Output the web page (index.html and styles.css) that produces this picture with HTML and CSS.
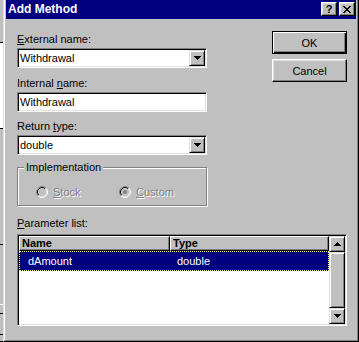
FILE: index.html
```html
<!DOCTYPE html>
<html>
<head>
<meta charset="utf-8">
<title>Add Method</title>
<link rel="stylesheet" href="styles.css">
</head>
<body>
<div class="screen">
  <div class="bgwin"></div>
  <div class="dialog">
    <div class="frame">
      <div class="titlebar">
        <span class="title">Add Method</span>
        <span class="tbtn help">?</span>
        <span class="tbtn close"><svg width="8" height="7" viewBox="0 0 8 7" shape-rendering="crispEdges"><path fill="#000" d="M0 0h2v1h-2zM6 0h2v1h-2zM1 1h2v1h-2zM5 1h2v1h-2zM2 2h4v1h-4zM3 3h2v1h-2zM2 4h4v1h-4zM1 5h2v1h-2zM5 5h2v1h-2zM0 6h2v1h-2zM6 6h2v1h-2z"/></svg></span>
      </div>
      <div class="client">
        <div class="top">
          <div class="form">
            <div class="lbl"><u>E</u>xternal name:</div>
            <div class="combo">
              <span class="val">Withdrawal</span>
              <span class="dd raised"><svg width="7" height="4" viewBox="0 0 7 4" shape-rendering="crispEdges"><path fill="#000" d="M0 0h7v1h-7zM1 1h5v1h-5zM2 2h3v1h-3zM3 3h1v1h-1z"/></svg></span>
            </div>
            <div class="lbl gap2">Internal <u>n</u>ame:</div>
            <div class="edit"><span class="val">Withdrawal</span></div>
            <div class="lbl gap3">Return <u>t</u>ype:</div>
            <div class="combo">
              <span class="val">double</span>
              <span class="dd raised"><svg width="7" height="4" viewBox="0 0 7 4" shape-rendering="crispEdges"><path fill="#000" d="M0 0h7v1h-7zM1 1h5v1h-5zM2 2h3v1h-3zM3 3h1v1h-1z"/></svg></span>
            </div>
            <fieldset class="group">
              <legend>Implementation</legend>
              <div class="radios">
                <div class="opt stock">
                  <svg class="radio" width="12" height="12" viewBox="0 0 12 12"><circle cx="6" cy="6" r="5" fill="#c0c0c0"/><path d="M2.11 9.89A5.5 5.5 0 0 1 9.89 2.11" fill="none" stroke="#808080"/><path d="M9.89 2.11A5.5 5.5 0 0 1 2.11 9.89" fill="none" stroke="#fff"/><path d="M2.82 9.18A4.5 4.5 0 0 1 9.18 2.82" fill="none" stroke="#000"/><path d="M9.18 2.82A4.5 4.5 0 0 1 2.82 9.18" fill="none" stroke="#dfdfdf"/></svg>
                  <span class="dis"><u>S</u>tock</span>
                </div>
                <div class="opt">
                  <svg class="radio" width="12" height="12" viewBox="0 0 12 12"><circle cx="6" cy="6" r="5" fill="#c0c0c0"/><path d="M2.11 9.89A5.5 5.5 0 0 1 9.89 2.11" fill="none" stroke="#808080"/><path d="M9.89 2.11A5.5 5.5 0 0 1 2.11 9.89" fill="none" stroke="#fff"/><path d="M2.82 9.18A4.5 4.5 0 0 1 9.18 2.82" fill="none" stroke="#000"/><path d="M9.18 2.82A4.5 4.5 0 0 1 2.82 9.18" fill="none" stroke="#dfdfdf"/><circle cx="6" cy="6" r="2" fill="#808080"/></svg>
                  <span class="dis"><u>C</u>ustom</span>
                </div>
              </div>
            </fieldset>
          </div>
          <div class="buttons">
            <button class="btn default" type="button">OK</button>
            <button class="btn" type="button">Cancel</button>
          </div>
        </div>
        <div class="lbl plabel"><u>P</u>arameter list:</div>
        <div class="listview">
          <div class="lv-main">
            <div class="lv-head">
              <div class="hcell">Name</div>
              <div class="hcell">Type</div>
            </div>
            <div class="lv-row selected">
              <span class="c1">dAmount</span>
              <span class="c2">double</span>
            </div>
          </div>
          <div class="scroll">
            <div class="sbtn raised"><svg width="7" height="4" viewBox="0 0 7 4" shape-rendering="crispEdges"><path fill="#000" d="M3 0h1v1h-1zM2 1h3v1h-3zM1 2h5v1h-5zM0 3h7v1h-7z"/></svg></div>
            <div class="thumb raised"></div>
            <div class="sbtn raised"><svg width="7" height="4" viewBox="0 0 7 4" shape-rendering="crispEdges"><path fill="#000" d="M0 0h7v1h-7zM1 1h5v1h-5zM2 2h3v1h-3zM3 3h1v1h-1z"/></svg></div>
          </div>
        </div>
      </div>
    </div>
  </div>
</div>
</body>
</html>
```
FILE: styles.css
```css
* { box-sizing: border-box; }
html, body { margin: 0; padding: 0; }
body {
  font-family: "Liberation Sans", Arial, sans-serif;
  font-size: 11px;
  color: #000;
  background: #c0c0c0;
}
.screen {
  display: flex;
  width: 359px;
  height: 342px;
  overflow: hidden;
  background: #c0c0c0;
}
.bgwin {
  width: 3px;
  flex: none;
  background: linear-gradient(to bottom,
    #c0c0c0 0 42px, #000 42px 43px, #fff 43px 128px, #000 128px 129px,
    #c0c0c0 129px 244px, #000 244px 245px, #c0c0c0 245px 304px,
    #fff 304px 305px, #c0c0c0 305px 313px, #000 313px 314px,
    #c0c0c0 314px 334px, #000 334px 335px, #c0c0c0 335px 341px, #000 341px);
}
.dialog {
  width: 356px;
  height: 342px;
  flex: none;
  background: #c0c0c0;
  border-left: 1px solid #dfdfdf;
  border-right: 1px solid #000;
  border-bottom: 1px solid #000;
}
.frame {
  height: 100%;
  border-left: 1px solid #fff;
  border-right: 1px solid #808080;
  border-bottom: 1px solid #808080;
  padding: 0 1px 1px;
  display: flex;
  flex-direction: column;
}
.titlebar {
  flex: none;
  height: 19px;
  background: #000080;
  display: flex;
  align-items: flex-start;
  padding: 0 1px 0 2px;
}
.title {
  flex: 1;
  color: #fff;
  font-weight: bold;
  font-size: 12px;
  line-height: 18px;
}
.tbtn {
  width: 16px;
  height: 14px;
  margin-top: 2px;
  background: #c0c0c0;
  border: 1px solid;
  border-color: #fff #000 #000 #fff;
  box-shadow: inset -1px -1px #808080, inset 1px 1px #dfdfdf;
  display: flex;
  align-items: center;
  justify-content: center;
}
.tbtn + .tbtn { margin-left: 2px; }
.help {
  font-weight: bold;
  font-size: 11px;
  line-height: 11px;
  padding-top: 1px;
}
.close svg { display: block; }
.client {
  flex: 1;
  display: flex;
  flex-direction: column;
  padding: 12px 9px 0 11px;
}
.top {
  display: flex;
  justify-content: space-between;
  align-items: flex-start;
}
.form {
  width: 190px;
  margin-top: 2px;
  display: flex;
  flex-direction: column;
}
.lbl {
  height: 13px;
  line-height: 13px;
  margin-bottom: 2px;
  white-space: nowrap;
}
.gap2 { margin-top: 9px; }
.gap3 { margin-top: 8px; }
.raised {
  background: #c0c0c0;
  border: 1px solid;
  border-color: #dfdfdf #000 #000 #dfdfdf;
  box-shadow: inset 1px 1px #fff, inset -1px -1px #808080;
}
.combo, .edit {
  height: 20px;
  background: #fff;
  border: 1px solid;
  border-color: #808080 #fff #fff #808080;
  box-shadow: inset 1px 1px #000, inset -1px -1px #dfdfdf;
  padding: 1px;
  display: flex;
  align-items: center;
}
.val {
  flex: 1;
  padding-left: 1px;
  line-height: 16px;
  white-space: nowrap;
}
.dd {
  width: 16px;
  height: 16px;
  display: flex;
  align-items: center;
  justify-content: center;
}
.dd svg, .sbtn svg { display: block; }
.group {
  margin: 6px 0 0;
  padding: 12px 0 7px 6px;
  min-width: 0;
  border: 1px solid #808080;
  box-shadow: inset 1px 1px #fff, 1px 1px #fff;
}
.group legend {
  padding: 0 2px;
  line-height: 13px;
  background: #c0c0c0;
}
.radios {
  display: flex;
  align-items: center;
  height: 12px;
  padding-left: 12px;
}
.opt {
  display: flex;
  align-items: center;
  gap: 5px;
}
.stock { width: 83px; }
.radio { display: block; flex: none; }
.dis {
  color: #808080;
  text-shadow: 1px 1px 0 #fff;
  line-height: 12px;
}
.buttons {
  width: 75px;
  display: flex;
  flex-direction: column;
  gap: 5px;
}
.btn {
  width: 75px;
  height: 23px;
  padding: 0;
  margin: 0;
  font: inherit;
  color: #000;
  background: #c0c0c0;
  border: 1px solid;
  border-color: #fff #000 #000 #fff;
  box-shadow: inset -1px -1px #808080, inset 1px 1px #dfdfdf;
  text-align: center;
}
.btn.default {
  border-color: #000;
  box-shadow: inset 1px 1px #fff, inset -1px -1px #000, inset -2px -2px #808080;
}
.plabel {
  margin-top: 11px;
  margin-bottom: 4px;
}
.listview {
  height: 92px;
  background: #fff;
  border: 1px solid;
  border-color: #808080 #fff #fff #808080;
  box-shadow: inset 1px 1px #000, inset -1px -1px #dfdfdf;
  padding: 1px;
  display: flex;
}
.lv-main {
  flex: 1;
  display: flex;
  flex-direction: column;
}
.lv-head {
  display: grid;
  grid-template-columns: 151px 1fr;
  height: 15px;
}
.hcell {
  background: #c0c0c0;
  border: 1px solid;
  border-color: #fff #000 #000 #fff;
  box-shadow: inset -1px -1px #808080;
  font-weight: bold;
  line-height: 12px;
  padding-left: 2px;
  white-space: nowrap;
}
.lv-row {
  display: grid;
  grid-template-columns: 151px 1fr;
  align-items: center;
  height: 20px;
}
.lv-row.selected {
  background: #000080;
  color: #fff;
  border: 1px dotted #ffff80;
}
.c1 { padding-left: 8px; }
.c2 { padding-left: 6px; }
.scroll {
  width: 16px;
  flex: none;
  display: flex;
  flex-direction: column;
}
.sbtn {
  height: 16px;
  flex: none;
  display: flex;
  align-items: center;
  justify-content: center;
}
.thumb { flex: 1; }
```
